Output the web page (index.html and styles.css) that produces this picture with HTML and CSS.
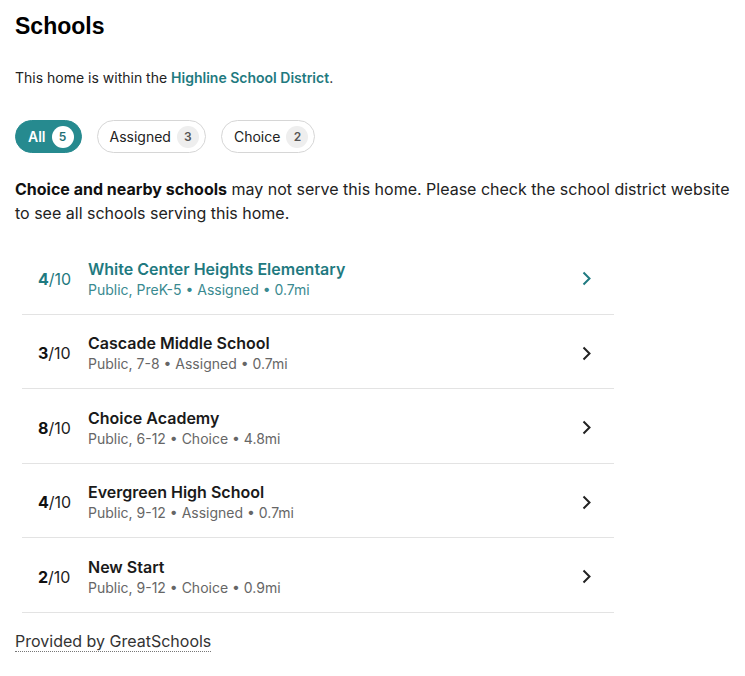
FILE: index.html
```html
<!DOCTYPE html>
<html>
<head>
<meta charset="utf-8">
<link rel="stylesheet" href="styles.css">
</head>
<body>
<section class="schools">
  <h2 class="title">Schools</h2>
  <p class="district">This home is within the <a class="district-link" href="#">Highline School District</a>.</p>
  <div class="filters">
    <button class="pill pill-active">All <span class="count">5</span></button>
    <button class="pill">Assigned <span class="count">3</span></button>
    <button class="pill">Choice <span class="count">2</span></button>
  </div>
  <p class="note"><strong>Choice and nearby schools</strong> may not serve this home. Please check the school district website to see all schools serving this home.</p>
  <ul class="list">
    <li class="row row-hover">
      <div class="rating"><b>4</b>/10</div>
      <div class="info">
        <div class="name">White Center Heights Elementary</div>
        <div class="meta">Public, PreK-5 • Assigned • 0.7mi</div>
      </div>
      <svg class="chev" width="10" height="15" viewBox="0 0 10 15"><path d="M1.5 1.5 L7.5 7.5 L1.5 13.5" fill="none" stroke="currentColor" stroke-width="2"/></svg>
    </li>
    <li class="row">
      <div class="rating"><b>3</b>/10</div>
      <div class="info">
        <div class="name">Cascade Middle School</div>
        <div class="meta">Public, 7-8 • Assigned • 0.7mi</div>
      </div>
      <svg class="chev" width="10" height="15" viewBox="0 0 10 15"><path d="M1.5 1.5 L7.5 7.5 L1.5 13.5" fill="none" stroke="currentColor" stroke-width="2"/></svg>
    </li>
    <li class="row">
      <div class="rating"><b>8</b>/10</div>
      <div class="info">
        <div class="name">Choice Academy</div>
        <div class="meta">Public, 6-12 • Choice • 4.8mi</div>
      </div>
      <svg class="chev" width="10" height="15" viewBox="0 0 10 15"><path d="M1.5 1.5 L7.5 7.5 L1.5 13.5" fill="none" stroke="currentColor" stroke-width="2"/></svg>
    </li>
    <li class="row">
      <div class="rating"><b>4</b>/10</div>
      <div class="info">
        <div class="name">Evergreen High School</div>
        <div class="meta">Public, 9-12 • Assigned • 0.7mi</div>
      </div>
      <svg class="chev" width="10" height="15" viewBox="0 0 10 15"><path d="M1.5 1.5 L7.5 7.5 L1.5 13.5" fill="none" stroke="currentColor" stroke-width="2"/></svg>
    </li>
    <li class="row">
      <div class="rating"><b>2</b>/10</div>
      <div class="info">
        <div class="name">New Start</div>
        <div class="meta">Public, 9-12 • Choice • 0.9mi</div>
      </div>
      <svg class="chev" width="10" height="15" viewBox="0 0 10 15"><path d="M1.5 1.5 L7.5 7.5 L1.5 13.5" fill="none" stroke="currentColor" stroke-width="2"/></svg>
    </li>
  </ul>
  <a class="provider" href="#">Provided by GreatSchools</a>
</section>
</body>
</html>
```
FILE: styles.css
```css
* { box-sizing: border-box; }
body {
  margin: 0;
  padding: 0 15px;
  font-family: Inter, "Liberation Sans", sans-serif;
  color: #111;
  background: #fff;
}
.title {
  margin: 0;
  padding-top: 12px;
  font-family: "Liberation Sans", Arial, sans-serif;
  font-size: 23px;
  line-height: 28px;
  font-weight: 700;
  color: #000;
}
.district {
  margin: 28px 0 0;
  font-size: 14px;
  line-height: 20px;
  color: #222;
}
.district-link {
  color: #1f7a80;
  font-weight: 600;
  text-decoration: none;
}
.filters {
  display: flex;
  gap: 15px;
  margin-top: 32px;
}
.pill {
  display: flex;
  align-items: center;
  gap: 6px;
  height: 33px;
  padding: 0 6px 0 12px;
  border: 1px solid #d6d6d6;
  border-radius: 17px;
  background: #fff;
  font-family: Inter, sans-serif;
  font-size: 14px;
  color: #222;
  cursor: pointer;
}
.pill .count {
  display: inline-flex;
  align-items: center;
  justify-content: center;
  width: 22px;
  height: 22px;
  border-radius: 50%;
  background: #eeeeee;
  font-size: 12px;
  font-weight: 600;
  color: #555;
}
.pill-active {
  background: #268a8f;
  border-color: #268a8f;
  color: #fff;
  font-weight: 600;
  padding-right: 7px;
}
.pill-active .count {
  background: #fff;
  color: #1f6f74;
}
.note {
  margin: 24px 0 0;
  font-size: 16px;
  line-height: 24px;
  color: #222;
}
.note strong { color: #111; }
.list {
  list-style: none;
  margin: 15px 0 0 7px;
  padding: 0;
  width: 592px;
}
.row {
  display: flex;
  align-items: center;
  height: 74.5px;
  padding: 4px 22px 0 16px;
  border-bottom: 1px solid #e3e3e3;
}
.rating {
  width: 50px;
  font-size: 16px;
  color: #222;
}
.rating b { font-weight: 700; color: #111; }
.info { flex: 1; }
.name {
  font-size: 16px;
  line-height: 20px;
  font-weight: 600;
  color: #1a1a1a;
}
.meta {
  margin-top: 2px;
  font-size: 14px;
  line-height: 18px;
  color: #666;
}
.chev { color: #222; }
.row-hover .name,
.row-hover .rating,
.row-hover .rating b,
.row-hover .chev { color: #1f7a80; }
.row-hover .meta { color: #3a8a90; }
.provider {
  display: inline-block;
  margin-top: 18px;
  font-size: 16px;
  line-height: 20px;
  color: #333;
  text-decoration: none;
  border-bottom: 1px dotted #777;
}
```
